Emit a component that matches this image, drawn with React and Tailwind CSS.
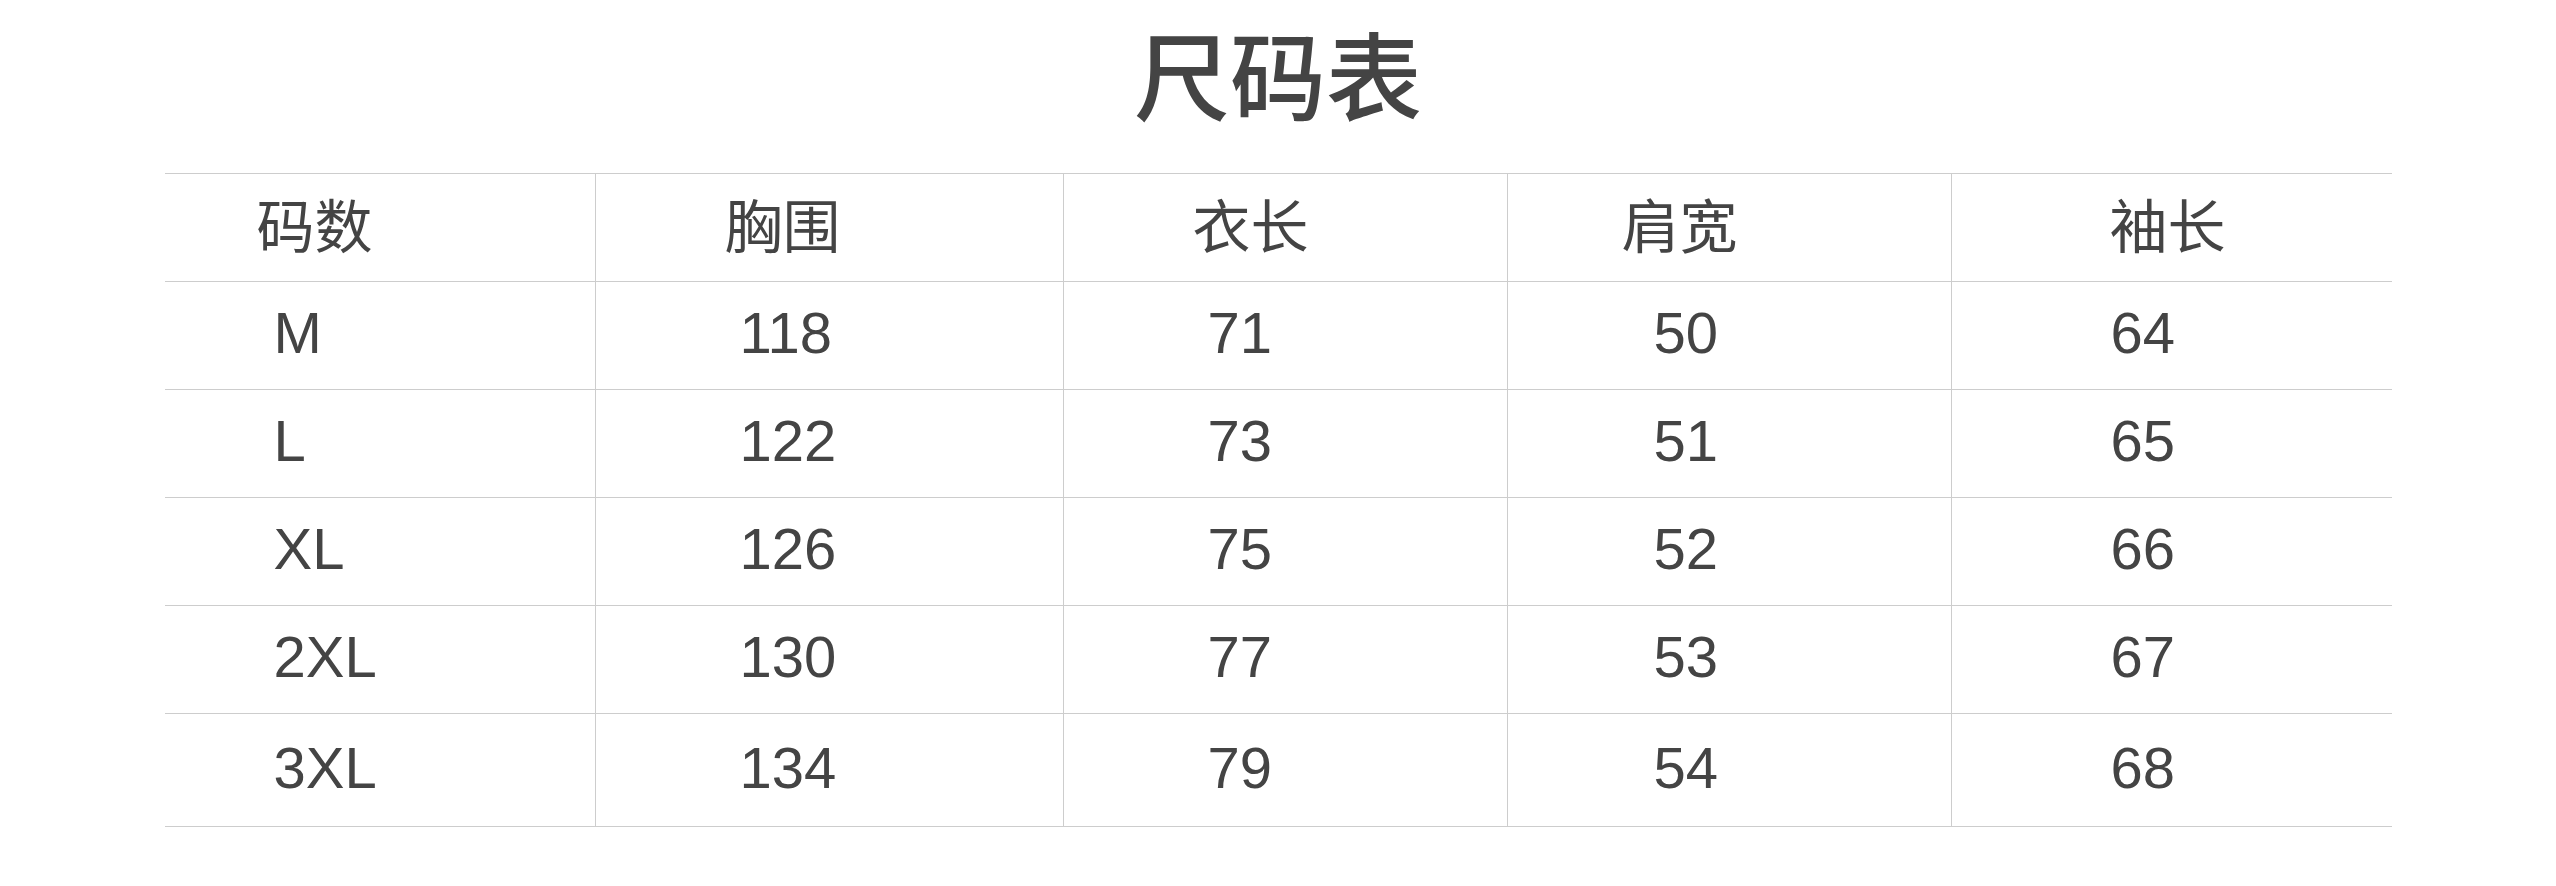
import React from 'react';

const headers = [
  { label: '码数', pad: 'pl-[92px]' },
  { label: '胸围', pad: 'pl-[129px]' },
  { label: '衣长', pad: 'pl-[129px]' },
  { label: '肩宽', pad: 'pl-[114px]' },
  { label: '袖长', pad: 'pl-[158px]' },
];

const dataPads = ['pl-[109px]', 'pl-[144px]', 'pl-[144px]', 'pl-[146px]', 'pl-[159px]'];

const rows = [
  ['M', '118', '71', '50', '64'],
  ['L', '122', '73', '51', '65'],
  ['XL', '126', '75', '52', '66'],
  ['2XL', '130', '77', '53', '67'],
  ['3XL', '134', '79', '54', '68'],
];

function Cell({ children, pad, last, lift }) {
  return (
    <div className={`flex items-center ${pad} ${last ? '' : 'border-r border-[#cdcdcd]'}`}>
      <span className={lift ? '-mt-[5px]' : ''}>{children}</span>
    </div>
  );
}

export default function App() {
  return (
    <div
      className="w-[2556px] h-[886px] bg-white text-[#444444]"
      style={{ fontFamily: '"Liberation Sans", "Noto Sans CJK SC", sans-serif' }}
    >
      {/* Title */}
      <h1
        className="text-center text-[96px] font-medium leading-normal"
        style={{ fontFamily: '"Noto Sans CJK SC", sans-serif' }}
      >
        尺码表
      </h1>

      {/* Size table */}
      <div className="mx-auto mt-[29px] w-[2227px] border-t border-[#cdcdcd] text-[58px] leading-[1.2]">
        <div className="grid h-[108px] grid-cols-[431px_468px_444px_444px_440px] border-b border-[#cdcdcd]">
          {headers.map((h, i) => (
            <Cell key={h.label} pad={h.pad} last={i === headers.length - 1}>
              {h.label}
            </Cell>
          ))}
        </div>
        {rows.map((row, r) => (
          <div
            key={row[0]}
            className={`grid grid-cols-[431px_468px_444px_444px_440px] border-b border-[#cdcdcd] ${
              r === rows.length - 1 ? 'h-[113px]' : 'h-[108px]'
            }`}
          >
            {row.map((v, i) => (
              <Cell key={i} pad={dataPads[i]} last={i === row.length - 1} lift>
                {v}
              </Cell>
            ))}
          </div>
        ))}
      </div>
    </div>
  );
}
